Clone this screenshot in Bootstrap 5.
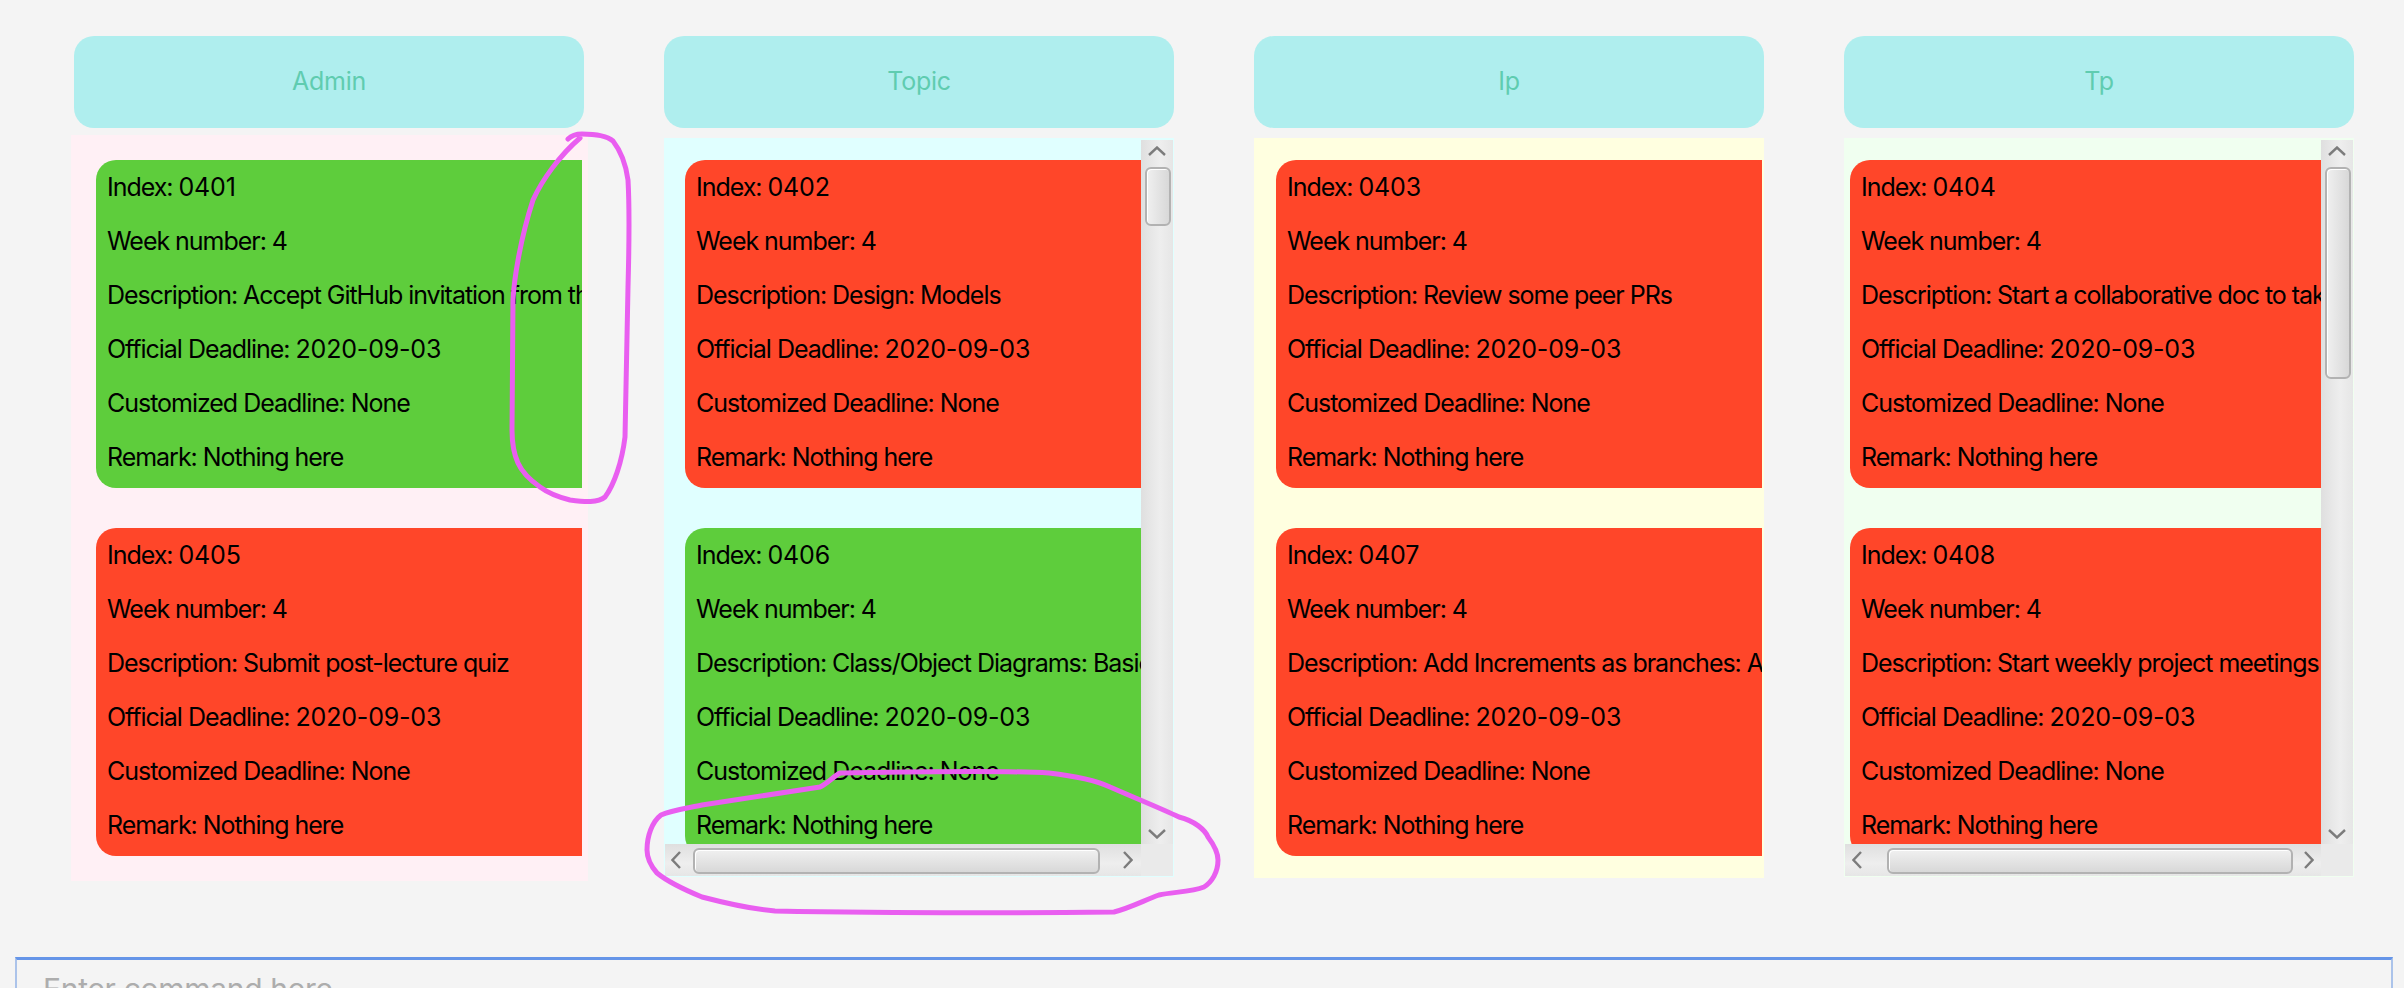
<!DOCTYPE html>
<html lang="en">
<head>
<meta charset="utf-8">
<title>Task board</title>
<link href="https://cdn.jsdelivr.net/npm/bootstrap@5.3.0/dist/css/bootstrap.min.css" rel="stylesheet">
<style>
html,body{height:988px;overflow:hidden;background:#f4f4f4;font-family:"Inter","Liberation Sans",sans-serif}
.board{height:988px;position:relative;padding-top:36px}
.columns{gap:80px;padding-left:74px;width:2404px}
.lane{width:510px;flex:none}
.lane-head{height:92px;background:#afeeee;color:#5fccb0;border-radius:20px;font-size:25px;letter-spacing:-.3px}
.pane{background:#e0ffff;margin-top:10px;height:739px;padding:2px 1px 1px}
.pane-a{background:#fff0f5;height:746px;width:517px;margin-left:-3px;margin-top:7px;padding:25px 6px 0 25px}
.pane-c{background:#ffffe0;height:740px;padding:22px 2px 0 22px}
.pane-d{background:#f0fff0}
.view{flex:1;min-width:0;overflow:hidden}
.inset-b{padding:20px 0 0 20px}
.inset-d{padding:20px 0 0 5px}
.cardlist{display:flex;flex-direction:column;gap:40px;width:2000px}
.task{width:600px;height:328px;border-radius:20px;padding:0 11px;color:#000;font-size:25px;letter-spacing:-1.03px;line-height:54px;white-space:nowrap}
.task div{height:54px}
.task.wide{width:486px;overflow:hidden;border-radius:20px 0 0 20px}
.num{letter-spacing:-.18px}
.ok{background:#5ecd3c}.late{background:#ff4629}
.vbar{width:32px;flex:none;background:linear-gradient(90deg,#dfdfdf,#eee 60%,#e6e6e6);position:relative}
.hbar{height:32px;flex:none;background:linear-gradient(180deg,#dfdfdf,#eee 60%,#e6e6e6)}
.hbar-track{flex:1;min-width:0;position:relative}
.corner{width:32px;flex:none;background:#eaeaea}
.thumb{position:absolute;border:2px solid #b2b2b2;border-radius:6px;box-shadow:inset 1px 1px 0 #fff}
.thumb-v{left:4px;top:27px;width:26px;background:linear-gradient(90deg,#f0f0f0,#d8d8d8)}
.thumb-h{top:4px;height:26px;background:linear-gradient(180deg,#f0f0f0,#d8d8d8)}
.arrow{position:absolute;fill:none;stroke:#7c7c7c;stroke-width:2.4}
.cmd{position:absolute;left:15px;top:957px;width:2378px;height:60px;border:solid #abc3ea;border-width:3px 2px 2px;border-top-color:#6595e8;padding:12px 26px;font-size:30px;letter-spacing:-.3px;color:#adadad;line-height:34px}
.scribble{position:absolute;left:0;top:0;pointer-events:none}
</style>
</head>
<body>
<div class="board">
<div class="d-flex columns">

<div class="lane">
<div class="lane-head d-flex align-items-center justify-content-center">Admin</div>
<div class="pane pane-a">
<div class="cardlist">
<div class="task wide ok"><div>Index: <span class="num">0401</span></div><div>Week number: <span class="num">4</span></div><div>Description: Accept GitHub invitation from the</div><div>Official Deadline: <span class="num">2020-09-03</span></div><div>Customized Deadline: None</div><div>Remark: Nothing here</div></div>
<div class="task wide late"><div>Index: <span class="num">0405</span></div><div>Week number: <span class="num">4</span></div><div>Description: Submit post-lecture quiz</div><div>Official Deadline: <span class="num">2020-09-03</span></div><div>Customized Deadline: None</div><div>Remark: Nothing here</div></div>
</div>
</div>
</div>

<div class="lane">
<div class="lane-head d-flex align-items-center justify-content-center">Topic</div>
<div class="pane d-flex flex-column">
<div class="d-flex flex-grow-1" style="min-height:0">
<div class="view inset-b"><div class="cardlist">
<div class="task late"><div>Index: <span class="num">0402</span></div><div>Week number: <span class="num">4</span></div><div>Description: Design: Models</div><div>Official Deadline: <span class="num">2020-09-03</span></div><div>Customized Deadline: None</div><div>Remark: Nothing here</div></div>
<div class="task ok"><div>Index: <span class="num">0406</span></div><div>Week number: <span class="num">4</span></div><div>Description: Class/Object Diagrams: Basics</div><div>Official Deadline: <span class="num">2020-09-03</span></div><div>Customized Deadline: None</div><div>Remark: Nothing here</div></div>
</div></div>
<div class="vbar"><svg class="arrow" style="left:7px;top:6px" width="18" height="10"><path d="M1 9 9 1.500 17 9"/></svg><div class="thumb thumb-v" style="height:59px"></div><svg class="arrow" style="left:7px;bottom:5px" width="18" height="10"><path d="M1 1 9 8.500 17 1"/></svg></div>
</div>
<div class="hbar d-flex">
<div class="hbar-track"><svg class="arrow" style="left:6px;top:7px" width="10" height="18"><path d="M9 1 1.500 9 9 17"/></svg><div class="thumb thumb-h" style="left:28px;width:407px"></div><svg class="arrow" style="left:458px;top:7px" width="10" height="18"><path d="M1 1 8.500 9 1 17"/></svg></div>
<div class="corner"></div>
</div>
</div>
</div>

<div class="lane">
<div class="lane-head d-flex align-items-center justify-content-center">Ip</div>
<div class="pane pane-c d-flex">
<div class="view"><div class="cardlist">
<div class="task late"><div>Index: <span class="num">0403</span></div><div>Week number: <span class="num">4</span></div><div>Description: Review some peer PRs</div><div>Official Deadline: <span class="num">2020-09-03</span></div><div>Customized Deadline: None</div><div>Remark: Nothing here</div></div>
<div class="task late"><div>Index: <span class="num">0407</span></div><div>Week number: <span class="num">4</span></div><div>Description: Add Increments as branches: A-Enhancement</div><div>Official Deadline: <span class="num">2020-09-03</span></div><div>Customized Deadline: None</div><div>Remark: Nothing here</div></div>
</div></div>
</div>
</div>

<div class="lane">
<div class="lane-head d-flex align-items-center justify-content-center">Tp</div>
<div class="pane pane-d d-flex flex-column">
<div class="d-flex flex-grow-1" style="min-height:0">
<div class="view inset-d"><div class="cardlist">
<div class="task late"><div>Index: <span class="num">0404</span></div><div>Week number: <span class="num">4</span></div><div>Description: Start a collaborative doc to take notes</div><div>Official Deadline: <span class="num">2020-09-03</span></div><div>Customized Deadline: None</div><div>Remark: Nothing here</div></div>
<div class="task late"><div>Index: <span class="num">0408</span></div><div>Week number: <span class="num">4</span></div><div>Description: Start weekly project meetings</div><div>Official Deadline: <span class="num">2020-09-03</span></div><div>Customized Deadline: None</div><div>Remark: Nothing here</div></div>
</div></div>
<div class="vbar"><svg class="arrow" style="left:7px;top:6px" width="18" height="10"><path d="M1 9 9 1.500 17 9"/></svg><div class="thumb thumb-v" style="height:212px"></div><svg class="arrow" style="left:7px;bottom:5px" width="18" height="10"><path d="M1 1 9 8.500 17 1"/></svg></div>
</div>
<div class="hbar d-flex">
<div class="hbar-track"><svg class="arrow" style="left:7px;top:7px" width="10" height="18"><path d="M9 1 1.500 9 9 17"/></svg><div class="thumb thumb-h" style="left:42px;width:406px"></div><svg class="arrow" style="left:459px;top:7px" width="10" height="18"><path d="M1 1 8.500 9 1 17"/></svg></div>
<div class="corner"></div>
</div>
</div>
</div>

</div>
<div class="cmd">Enter command here</div>
<svg class="scribble" width="2404" height="988" fill="none" stroke="#e95ef0" stroke-width="5" stroke-linecap="round" stroke-linejoin="round">
<path d="M568 139C572 135 576 134 582 134C595 134 607 136 613 141C620 150 626 165 628 180C630 215 629 250 628 287L625 437C622 462 614 485 605 497C598 503 585 502 570 500C558 497 548 493 540 487C530 480 522 472 518 463C513 452 512 442 512 430L513 300C514 280 520 240 533 200C542 180 560 155 580 138"/>
<path d="M840 773C900 772 1000 770 1049 773C1075 776 1095 780 1110 787C1135 798 1160 808 1179 817C1195 821 1205 830 1208 837C1214 845 1218 852 1218 860C1218 872 1212 882 1204 887C1192 892 1172 892 1159 895C1145 900 1130 908 1114 912C1010 913 880 913 775 911C750 909 725 903 702 897C685 890 668 882 657 873C650 865 647 857 647 850C647 836 652 822 661 815C672 810 688 808 702 805L820 787C828 783 833 777 840 773Z"/>
</svg>
</div>
</body>
</html>
